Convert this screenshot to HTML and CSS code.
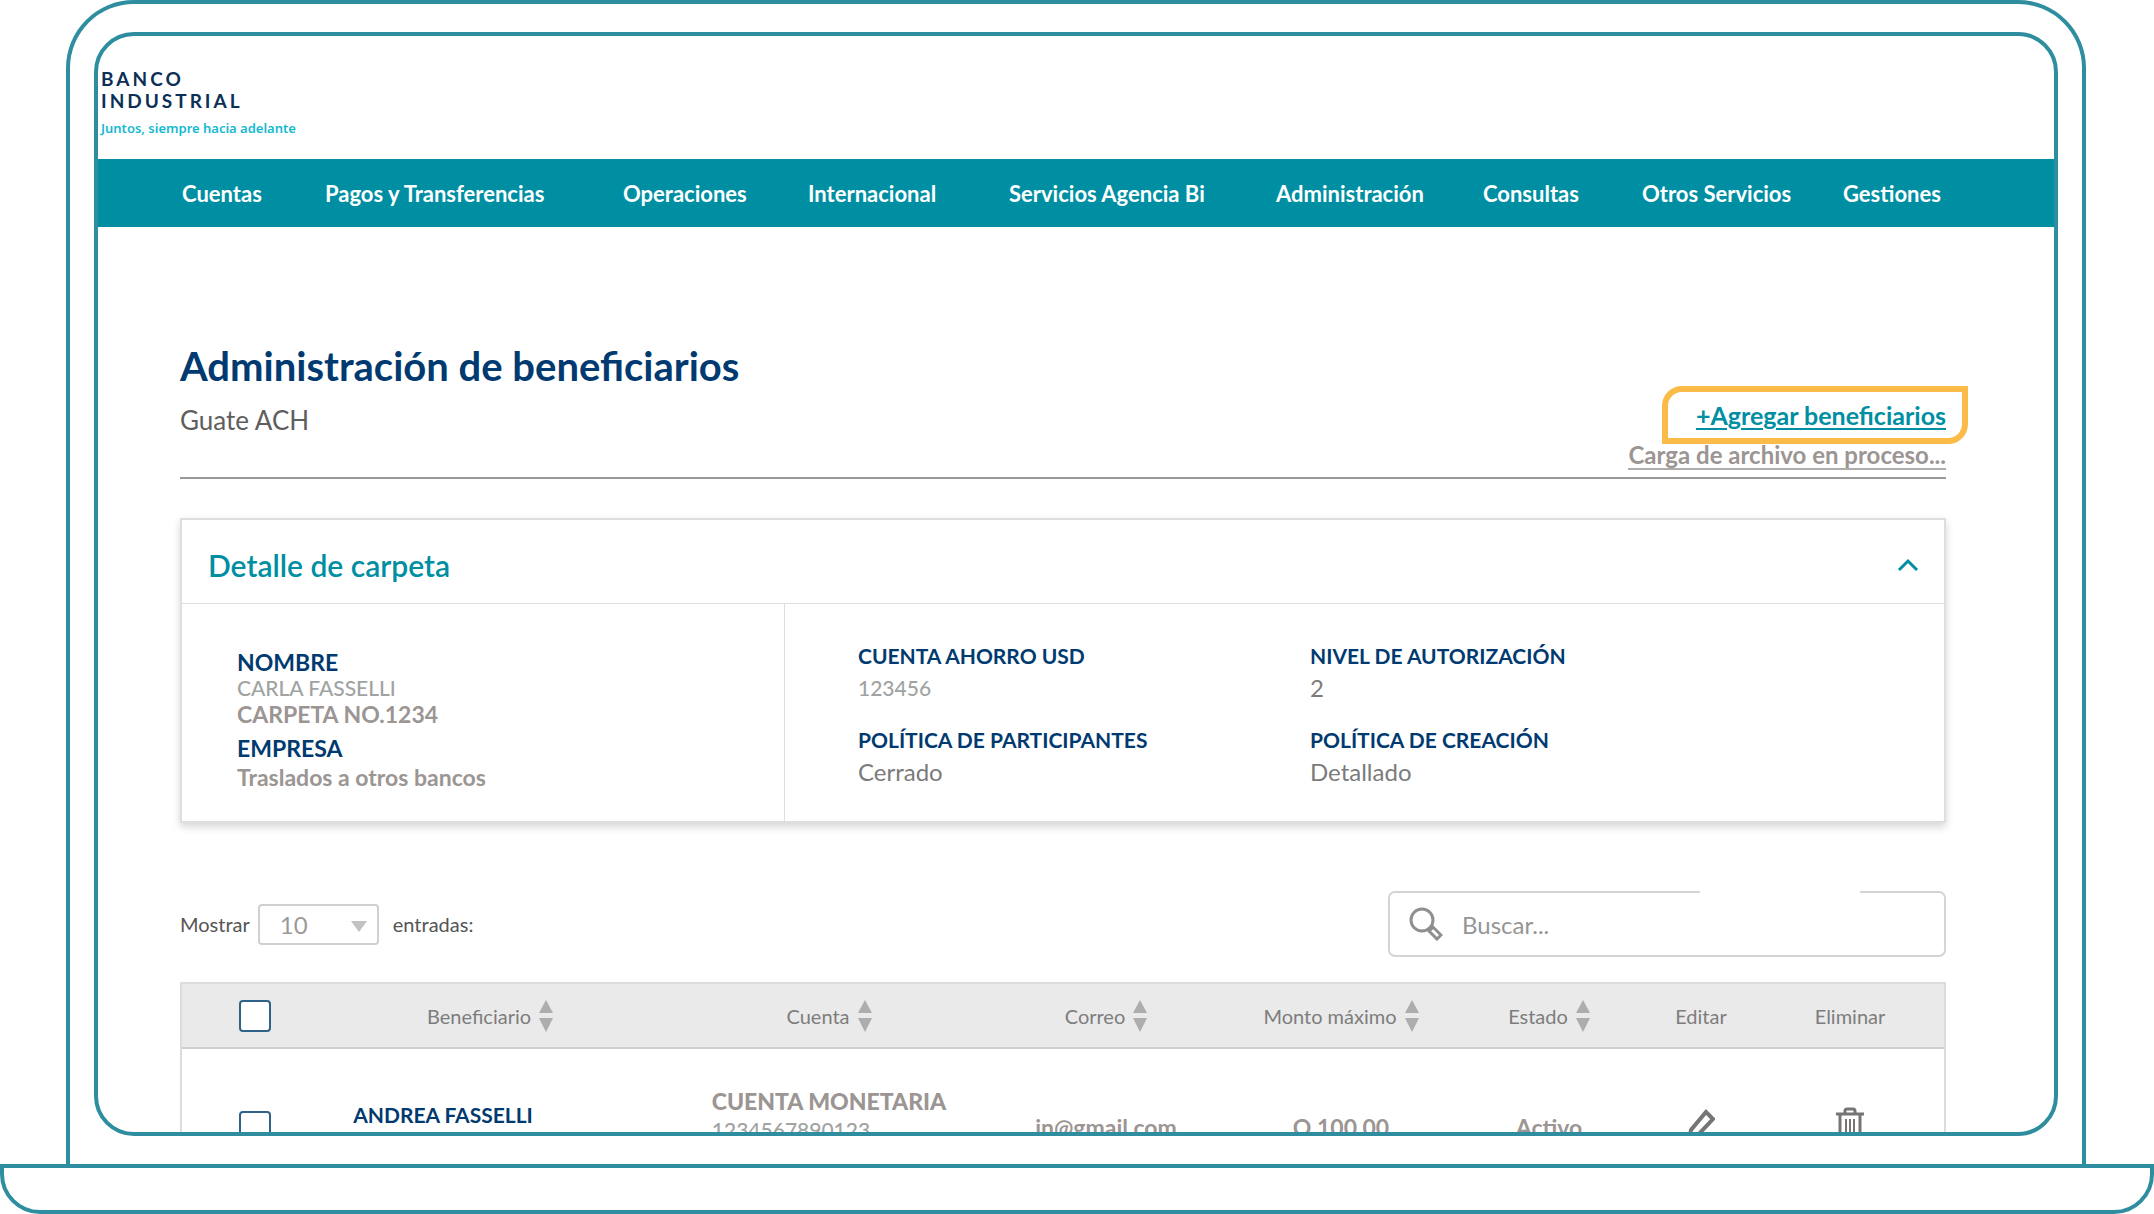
FILE: index.html
```html
<!DOCTYPE html>
<html lang="es">
<head>
<meta charset="utf-8">
<meta name="viewport" content="width=device-width, initial-scale=1">
<title>Administración de beneficiarios</title>
<link rel="stylesheet" href="styles.css">
</head>
<body>
<svg class="defs" aria-hidden="true">
  <symbol id="sort" viewBox="0 0 14 32"><path d="M7 0l7 13H0zM0 18h14L7 32z" fill="#adadad"/></symbol>
</svg>
<div class="laptop">
  <div class="lid">
    <div class="screen">
      <header class="brand">
        <div class="brand-name">BANCO<br>INDUSTRIAL</div>
        <div class="brand-tagline">Juntos, siempre hacia adelante</div>
      </header>
      <nav class="nav">
        <a href="#">Cuentas</a>
        <a href="#">Pagos y Transferencias</a>
        <a href="#">Operaciones</a>
        <a href="#">Internacional</a>
        <a href="#">Servicios Agencia Bi</a>
        <a href="#">Administración</a>
        <a href="#">Consultas</a>
        <a href="#">Otros Servicios</a>
        <a href="#">Gestiones</a>
      </nav>
      <main class="content">
        <div class="heading">
          <div>
            <h1>Administración de beneficiarios</h1>
            <p class="subtitle">Guate ACH</p>
          </div>
          <div class="actions">
            <a class="add" href="#">+Agregar beneficiarios</a>
            <a class="upload" href="#">Carga de archivo en proceso...</a>
          </div>
        </div>

        <section class="card">
          <div class="card-head">
            <h2>Detalle de carpeta</h2>
            <button class="toggle" type="button" aria-label="Contraer detalle">
              <svg width="22" height="14" viewBox="0 0 22 14"><path d="M2 12l9-9 9 9" fill="none" stroke="#008fa2" stroke-width="3"/></svg>
            </button>
          </div>
          <div class="card-body">
            <dl class="owner">
              <div>
                <dt>NOMBRE</dt>
                <dd class="light">CARLA FASSELLI</dd>
                <dd>CARPETA NO.1234</dd>
              </div>
              <div>
                <dt>EMPRESA</dt>
                <dd class="company">Traslados a otros bancos</dd>
              </div>
            </dl>
            <dl class="policy">
              <div><dt>CUENTA AHORRO USD</dt><dd class="number">123456</dd></div>
              <div><dt>NIVEL DE AUTORIZACIÓN</dt><dd>2</dd></div>
              <div><dt>POLÍTICA DE PARTICIPANTES</dt><dd>Cerrado</dd></div>
              <div><dt>POLÍTICA DE CREACIÓN</dt><dd>Detallado</dd></div>
            </dl>
          </div>
        </section>

        <div class="toolbar">
          <div class="page-size">
            <label for="size">Mostrar</label>
            <span class="select"><select id="size"><option>10</option><option>25</option></select></span>
            <span>entradas:</span>
          </div>
          <label class="search">
            <svg width="34" height="34" viewBox="0 0 34 34" fill="none" stroke="#8f8f8f"><circle cx="13" cy="13" r="11" stroke-width="3"/><path d="M20 20l3 3" stroke-width="3"/><path d="M20 24l4-4 8 8-4 4z" stroke-width="3"/></svg>
            <input type="search" placeholder="Buscar..." aria-label="Buscar">
          </label>
        </div>

        <table class="list">
          <colgroup><col class="c-check"><col class="c-name"><col><col class="c-mail"><col class="c-amount"><col class="c-state"><col class="c-edit"><col class="c-delete"></colgroup>
          <thead>
            <tr>
              <th><input type="checkbox" aria-label="Seleccionar todos"></th>
              <th><button type="button">Beneficiario<svg><use href="#sort"/></svg></button></th>
              <th><button type="button">Cuenta<svg><use href="#sort"/></svg></button></th>
              <th><button type="button">Correo<svg><use href="#sort"/></svg></button></th>
              <th><button type="button">Monto máximo<svg><use href="#sort"/></svg></button></th>
              <th><button type="button">Estado<svg><use href="#sort"/></svg></button></th>
              <th>Editar</th>
              <th class="last">Eliminar</th>
            </tr>
          </thead>
          <tbody>
            <tr>
              <td><input type="checkbox" aria-label="Seleccionar a Andrea Fasselli"></td>
              <td class="name">ANDREA FASSELLI</td>
              <td class="account"><div><strong>CUENTA MONETARIA</strong><br><span>1234567890123</span></div></td>
              <td>in@gmail.com</td>
              <td>Q 100.00</td>
              <td>Activo</td>
              <td><button type="button" aria-label="Editar"><svg width="28" height="32" viewBox="0 0 28 32"><path d="M19 3l7 7L10 27l-8 3 2-9z" fill="none" stroke="#757575" stroke-width="4"/></svg></button></td>
              <td class="last"><button type="button" aria-label="Eliminar"><svg width="28" height="36" viewBox="0 0 28 36" fill="none" stroke="#757575"><path d="M0 7h28" stroke-width="3"/><path d="M9 6V4q0-2 2-2h6q2 0 2 2v2" stroke-width="3"/><path d="M4 8v22q0 4 4 4h12q4 0 4-4V8" stroke-width="3"/><path d="M10 12v18M14 12v18M18 12v18" stroke-width="2"/></svg></button></td>
            </tr>
          </tbody>
        </table>
      </main>
    </div>
  </div>
  <div class="base"></div>
</div>
</body>
</html>
```
FILE: styles.css
```css
* { box-sizing: border-box; }

body {
  margin: 0;
  background: #fff;
  color: #9b9593;
  font-family: Lato, "Open Sans", sans-serif;
  font-size: 24px;
}

h1, h2, p, dl, dd { margin: 0; }

button {
  padding: 0;
  border: 0;
  background: none;
  color: inherit;
  font: inherit;
}

.defs { display: none; }

/* Laptop frame */
.laptop {
  display: flex;
  flex-direction: column;
  height: 100vh;
  overflow: hidden;
}

.lid {
  display: flex;
  flex: 1;
  min-height: 0;
  margin: 0 68px 0 66px;
  padding: 28px 24px;
  border: 4px solid #2e8d9f;
  border-bottom: 0;
  border-radius: 68px 68px 0 0;
}

.screen {
  flex: 1;
  min-width: 0;
  overflow: hidden;
  border: 4px solid #2e8d9f;
  border-radius: 40px;
}

.base {
  height: 50px;
  border: 4px solid #2e8d9f;
  border-radius: 0 0 40px 40px;
}

/* Brand */
.brand {
  height: 123px;
  padding: 32px 3px 0;
}

.brand-name {
  color: #0b2f57;
  font-size: 19px;
  font-weight: 700;
  line-height: 22px;
  letter-spacing: 3px;
}

.brand-tagline {
  margin-top: 8px;
  color: #16b9d0;
  font-family: "Noto Sans", sans-serif;
  font-size: 13px;
  font-weight: 600;
  line-height: 16px;
}

/* Navigation */
.nav {
  display: grid;
  grid-template-columns: 143fr 298fr 185fr 201fr 267fr 207fr 159fr 201fr 98fr;
  align-items: center;
  height: 68px;
  padding: 0 113px 0 84px;
  background: #008fa2;
}

.nav a {
  color: #fff;
  font-size: 22px;
  font-weight: 700;
  text-decoration: none;
  white-space: nowrap;
}

/* Page heading */
.content { padding: 115px 108px 0 82px; }

.heading {
  display: flex;
  align-items: flex-start;
  justify-content: space-between;
  border-bottom: 2px solid #999;
}

h1 {
  color: #003a70;
  font-size: 40px;
  font-weight: 700;
  line-height: 48px;
}

.subtitle {
  margin-top: 14px;
  color: #5e5e5e;
  font-size: 26px;
  line-height: 32px;
}

.actions {
  display: flex;
  flex-direction: column;
  align-items: flex-end;
  padding: 44px 0 7px;
}

.add {
  margin-right: -22px;
  padding: 0 16px 0 28px;
  border: 6px solid #fbbb48;
  border-radius: 20px 0;
  color: #008fa2;
  font-size: 25px;
  font-weight: 700;
  line-height: 46px;
  text-underline-offset: 3px;
}

.upload {
  margin-top: -2px;
  border-bottom: 2px solid #b0acaa;
  color: #9b9593;
  font-weight: 700;
  line-height: 26px;
  text-decoration: none;
}

/* Folder details */
.card {
  margin-top: 39px;
  border: 2px solid #dedede;
  box-shadow: 0 4px 8px rgba(0, 0, 0, 0.16);
}

.card-head {
  display: flex;
  align-items: center;
  justify-content: space-between;
  padding: 27px 25px 20px 26px;
  border-bottom: 1px solid #dedede;
}

h2 {
  color: #008fa2;
  font-size: 30px;
  font-weight: 600;
  line-height: 36px;
}

.toggle { display: flex; }

.card-body { display: flex; }

dt {
  color: #003a70;
  font-weight: 700;
}

.owner {
  display: grid;
  gap: 8px;
  width: 603px;
  padding: 45px 0 31px 55px;
  border-right: 1px solid #dedede;
  font-size: 23px;
  font-weight: 700;
  line-height: 26px;
}

.owner .light {
  color: #a0a3a2;
  font-size: 21px;
  font-weight: 500;
}

.owner .company { margin-top: 3px; }

.policy {
  display: grid;
  flex: 1;
  grid-template-columns: 452px 1fr;
  align-content: start;
  gap: 22px 0;
  padding: 38px 0 0 73px;
}

.policy dt {
  font-size: 21px;
  line-height: 28px;
}

.policy dd {
  margin-top: 2px;
  color: #7b7b7b;
  line-height: 32px;
}

.policy .number {
  color: #a0a3a2;
  font-size: 21px;
  font-weight: 500;
}

/* Table tools */
.toolbar {
  display: flex;
  align-items: center;
  justify-content: space-between;
  margin-top: 68px;
}

.page-size {
  display: flex;
  align-items: center;
  color: #555;
  font-size: 20px;
}

.select {
  position: relative;
  margin: 0 14px 0 8px;
}

.select::after {
  content: "";
  position: absolute;
  top: 17px;
  right: 12px;
  border: 8px solid transparent;
  border-top: 11px solid #c2c2c2;
  border-bottom: 0;
  pointer-events: none;
}

.select select {
  appearance: none;
  width: 121px;
  height: 41px;
  padding: 0 20px;
  border: 2px solid #d0d0d0;
  border-radius: 4px;
  background: #fff;
  color: #9a9a9a;
  font: 24px Lato, sans-serif;
}

.search {
  position: relative;
  display: flex;
  align-items: center;
  gap: 19px;
  width: 558px;
  height: 66px;
  padding: 0 19px;
  border: 2px solid #d4d4d4;
  border-radius: 7px;
}

/* Opening in the top edge of the search field */
.search::before {
  content: "";
  position: absolute;
  top: -2px;
  right: 84px;
  width: 160px;
  height: 2px;
  background: #fff;
}

.search input {
  flex: 1;
  min-width: 0;
  padding: 0;
  border: 0;
  outline: 0;
  background: none;
  color: #757575;
  font: inherit;
}

.search input::placeholder { color: #959595; }

/* Beneficiary list */
.list {
  width: 100%;
  margin-top: 25px;
  border-collapse: separate;
  border-spacing: 0;
  border: 2px solid #dcdcdc;
  table-layout: fixed;
  text-align: center;
}

.c-check { width: 146px; }
.c-name { width: 324px; }
.c-mail { width: 200px; }
.c-amount { width: 270px; }
.c-state { width: 146px; }
.c-edit { width: 158px; }
.c-delete { width: 164px; }

.list th,
.list td { padding: 0; }

.list th {
  height: 65px;
  border-bottom: 2px solid #cfcfcf;
  background: #eaeaea;
  color: #7d7d7d;
  font-size: 20px;
  font-weight: 400;
}

.list th button {
  display: inline-flex;
  align-items: center;
  gap: 8px;
}

.list th svg {
  width: 14px;
  height: 32px;
}

.list td {
  height: 156px;
  font-size: 23px;
  font-weight: 700;
  line-height: 28px;
}

.list .last { padding-right: 24px; }

.list input {
  appearance: none;
  display: block;
  width: 32px;
  height: 32px;
  margin: 0 auto;
  border: 2px solid #2f6288;
  border-radius: 4px;
  background: #fff;
}

.list .name {
  padding: 0 94px 24px 0;
  color: #003a70;
  font-size: 21px;
}

.list .account { padding-bottom: 24px; }

.account div {
  display: inline-block;
  text-align: left;
}

.account span {
  color: #a0a3a2;
  font-size: 21px;
  font-weight: 500;
}
```
